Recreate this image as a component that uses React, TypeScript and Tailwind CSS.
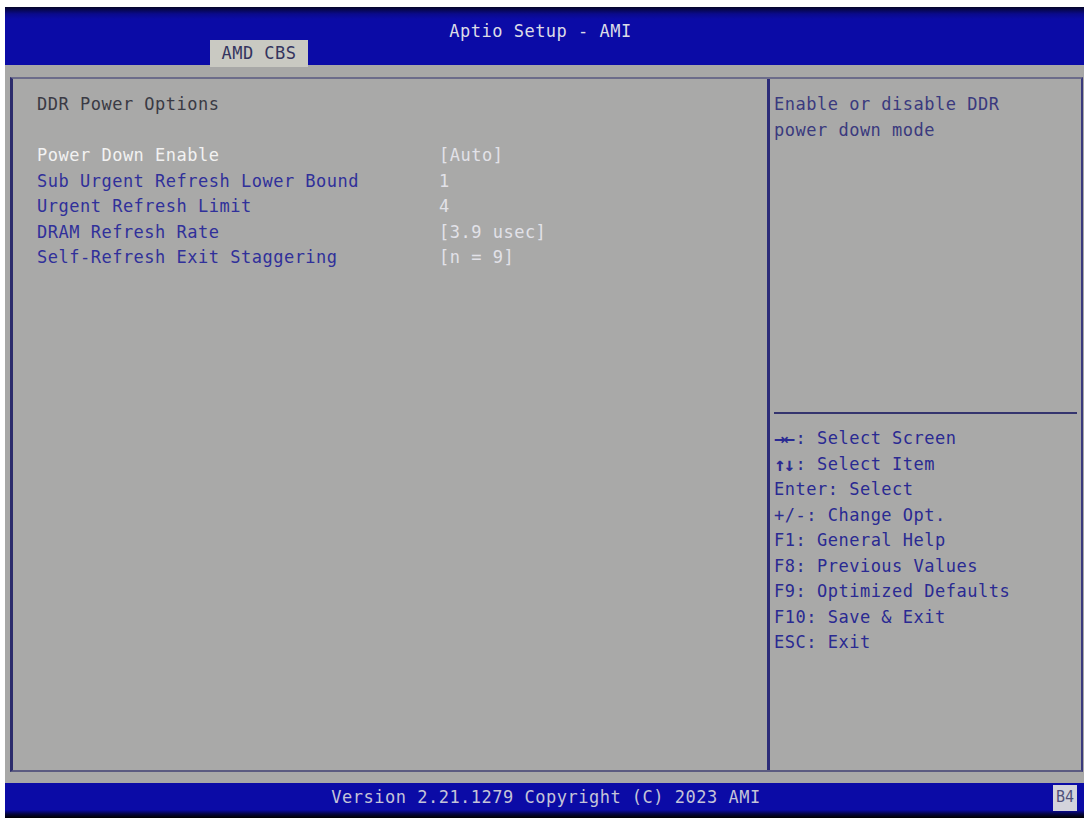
import React from 'react';

interface Option {
    label: string;
    value: string;
    selected?: boolean;
}

const options: Option[] = [
    { label: 'Power Down Enable', value: '[Auto]', selected: true },
    { label: 'Sub Urgent Refresh Lower Bound', value: '1' },
    { label: 'Urgent Refresh Limit', value: '4' },
    { label: 'DRAM Refresh Rate', value: '[3.9 usec]' },
    { label: 'Self-Refresh Exit Staggering', value: '[n = 9]' },
];

// first entry of each pair is the key, drawn a bit heavier for arrow glyphs
const keys: [string, string][] = [
    ['→←', ': Select Screen'],
    ['↑↓', ': Select Item'],
    ['Enter', ': Select'],
    ['+/-', ': Change Opt.'],
    ['F1', ': General Help'],
    ['F8', ': Previous Values'],
    ['F9', ': Optimized Defaults'],
    ['F10', ': Save & Exit'],
    ['ESC', ': Exit'],
];

const App: React.FC = () => {
    return (
        <div className="w-[1089px] h-[820px] bg-white pt-[7px] pl-[5px] font-['DejaVu_Sans_Mono','Liberation_Mono',monospace] text-[17px] tracking-[0.5px] leading-[25.5px] whitespace-pre">
            <div className="w-[1079px] h-[811px] flex flex-col bg-[#a8a8a7]">
                {/* header */}
                <div className="h-[58px] flex flex-col bg-[linear-gradient(to_bottom,#05052a_0px,#0a0a8c_7px,#0b0ba6_12px,#0b0ba6_100%)]">
                    <div className="h-[33px] pt-[12px] text-center text-[#dcdce6] pr-[8px]">Aptio Setup - AMI</div>
                    <div className="flex-1 flex">
                        <div className="ml-[205px] w-[98px] bg-[#c9c9c2] text-[#34345e] text-center pt-[1px]">AMD CBS</div>
                    </div>
                </div>

                {/* body */}
                <div className="flex-1 pt-[12px] pl-[5px] pr-[1px] pb-[11px] flex">
                    <div className="flex-1 flex border-l-[3px] border-l-[#2c2c6c] border-t-2 border-t-[#6c6c8a] border-r-2 border-r-[#3a3a7c] border-b-2 border-b-[#5a5a80] bg-[#a9a9a8]">
                        <div className="w-[754px] pl-[24px] pt-[13px]">
                            <div className="text-[#3a3a44]">DDR Power Options</div>
                            <div className="h-[25.5px]" />
                            {options.map(o => (
                                <div key={o.label} className="flex h-[25.5px]">
                                    <div className={`w-[402px] ${o.selected ? 'text-[#f2f2f2]' : 'text-[#30309a]'}`}>{o.label}</div>
                                    <div className="text-[#e2e2e8]">{o.value}</div>
                                </div>
                            ))}
                        </div>
                        <div className="w-[3px] bg-[#2c2c78]" />
                        <div className="flex-1 flex flex-col">
                            <div className="h-[333px] pl-[4px] pt-[13px] text-[#3a3a7e]">
                                <div>Enable or disable DDR</div>
                                <div>power down mode</div>
                            </div>
                            <div className="ml-[4px] mr-[4px] h-[2px] bg-[#34346e]" />
                            <div className="pl-[4px] pt-[12px] text-[#2a2a92]">
                                {keys.map(([k, t]) => (
                                    <div key={k} className="flex">
                                        {k.length === 2 && (k === '→←' || k === '↑↓') ? (
                                            <span className="w-[21.5px] font-bold text-[19px] tracking-[-2px]">{k}</span>
                                        ) : (
                                            <span>{k}</span>
                                        )}
                                        <span>{t}</span>
                                    </div>
                                ))}
                            </div>
                        </div>
                    </div>
                </div>

                {/* footer */}
                <div className="h-[35px] flex flex-col bg-[linear-gradient(to_bottom,#0b0ba6_0px,#0b0ba6_27px,#050540_31px,#000000_100%)]">
                    <div className="h-[29px] flex items-center">
                        <div className="flex-1 text-center text-[#c4c4d8] pl-[34px]">Version 2.21.1279 Copyright (C) 2023 AMI</div>
                        <div className="w-[24px] h-[26px] mr-[7px] bg-[#d4d4dc] text-[#50507a] text-[15px] tracking-normal flex items-center justify-center">B4</div>
                    </div>
                </div>
            </div>
        </div>
    );
};

export default App;
